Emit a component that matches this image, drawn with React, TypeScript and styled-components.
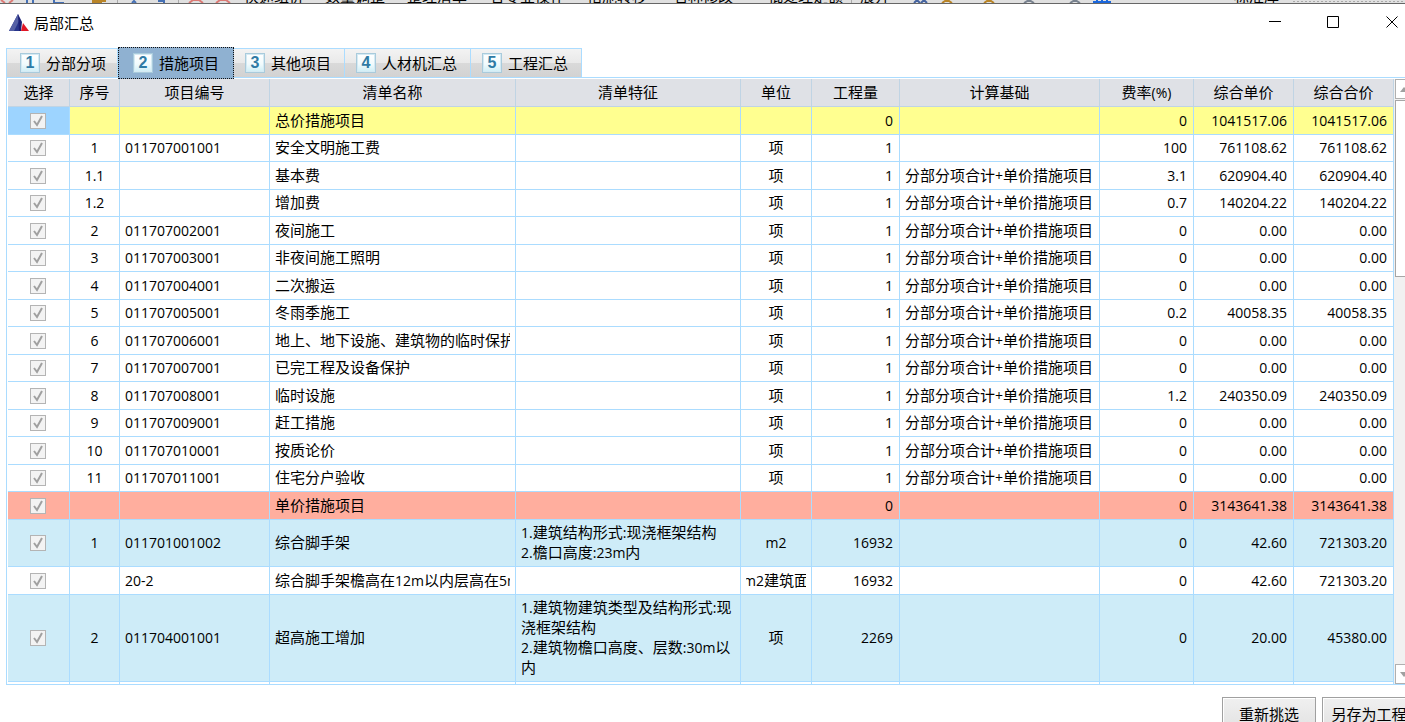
import React from 'react';
import styled, { createGlobalStyle, css } from 'styled-components';

const LINE = '#abdcff';

const Global = createGlobalStyle`
  *, *::before, *::after { box-sizing: border-box; }
  html, body, #root { height: 100%; }
  body {
    margin: 0;
    overflow: hidden;
    background: #fff;
    color: #000;
    font: 15px/20px "Noto Sans CJK SC", sans-serif;
  }
  button, input { font: inherit; color: inherit; margin: 0; }
`;

const Page = styled.div`
  display: flex;
  flex-direction: column;
  height: 100%;
  overflow: hidden;
`;

const BackStrip = styled.div`
  flex: none;
  position: relative;
  height: 4px;
  overflow: hidden;
  background: #e0e0e0;
  border-bottom: 1px solid #666;
`;

const BackLabel = styled.span<{ $x: number }>`
  position: absolute;
  left: ${p => p.$x}px;
  bottom: -3px;
  white-space: nowrap;
  line-height: 20px;
`;

const BackIcons = styled.svg`
  position: absolute;
  left: 0;
  top: 0;
`;

const TitleBar = styled.header`
  flex: none;
  display: flex;
  align-items: center;
  gap: 4px;
  height: 37px;
  padding-left: 9px;
`;

const Title = styled.h1`
  margin: 0;
  flex: 1;
  font-size: 15px;
  font-weight: 400;
  line-height: 20px;
`;

const CaptionButtons = styled.div`
  display: flex;
  margin-right: -17px;
`;

const CaptionButton = styled.button`
  display: grid;
  place-items: center;
  width: 59px;
  height: 34px;
  padding: 0;
  border: 0;
  background: transparent;
`;

const Tabs = styled.nav`
  flex: none;
  display: flex;
  align-items: flex-end;
  height: 36px;
  padding-left: 6px;
`;

const Tab = styled.button<{ $active?: boolean }>`
  display: flex;
  align-items: center;
  gap: 6px;
  height: 29px;
  padding: 0 13px 0 11px;
  border: 1px solid ${LINE};
  border-width: 1px 1px 0 0;
  background: linear-gradient(#f3f3f3, #e9e9e9 50%, #d9d9d9 51%, #d2d2d2);
  white-space: nowrap;
  &:first-child {
    padding: 0 11px 0 13px;
    border-left-width: 1px;
  }
  ${p => p.$active && css`
    position: relative;
    height: 32px;
    margin-bottom: -2px;
    padding: 0 14px;
    border: 1px dotted #111;
    background: #8fb1d1;
  `}
`;

const Badge = styled.span`
  display: grid;
  place-items: center;
  width: 20px;
  height: 20px;
  border: 1px solid #a9cbdc;
  box-shadow: inset 0 0 0 1px #d5eaf3;
  background: linear-gradient(#fff, #f2fbfd 55%, #cdeef6);
  color: #2f7ba5;
  font: 700 16px/18px "Liberation Sans", sans-serif;
`;

const Panel = styled.main`
  flex: 1;
  min-height: 0;
  display: flex;
  margin-left: 6px;
  padding: 1px 0 0 1px;
  border: 1px solid ${LINE};
  border-right: 0;
  overflow: hidden;
`;

const Grid = styled.table`
  flex: 1;
  min-width: 0;
  width: 100%;
  height: max-content;
  table-layout: fixed;
  border-collapse: separate;
  border-spacing: 0;
`;

const HeadCell = styled.th`
  height: 28px;
  padding: 0 0 2px;
  border: 1px solid #c0d4e4;
  border-width: 0 1px 1px 0;
  background: #dfe1e6;
  font-weight: 400;
  white-space: nowrap;
`;

type Tone = 'total' | 'unit' | 'item' | 'plain';

const tones: Record<Tone, string> = {
  total: '#ffff90',
  unit: '#ffae9e',
  item: '#ceecf8',
  plain: '#fff',
};

const Row = styled.tr<{ $tone: Tone; $height: number }>`
  height: ${p => p.$height}px;
  background: ${p => tones[p.$tone]};
`;

const Cell = styled.td<{ $align?: 'left' | 'center' | 'right'; $current?: boolean }>`
  padding: 0 ${p => (p.$align === 'right' ? 6 : 5)}px 2px 5px;
  border: 1px solid ${LINE};
  border-width: 0 1px 1px 0;
  text-align: ${p => p.$align ?? 'left'};
  vertical-align: middle;
  ${p => p.$current && css`background: #9dd4ff;`}
`;

const CheckCell = styled(Cell)`
  padding: 0 6px 0 5px;
`;

const Clip = styled.div<{ $center?: boolean; $wrap?: boolean }>`
  display: flex;
  flex-direction: column;
  align-items: ${p => (p.$center ? 'center' : 'stretch')};
  overflow: hidden;
  white-space: ${p => (p.$wrap ? 'normal' : 'nowrap')};
  word-break: break-all;
`;

const Latin = styled.span`
  font-family: "Open Sans", sans-serif;
  font-size: 14px;
  line-height: 14px;
`;

const Check = styled.input`
  appearance: none;
  display: block;
  width: 16px;
  height: 16px;
  margin: 0 auto;
  border: 1px solid #b4b4b4;
  background: #f3f3f3;
`;

const CheckBox = styled.div`
  display: grid;
  justify-content: center;
  & > * { grid-area: 1 / 1; }
`;

const Tick = styled.svg`
  pointer-events: none;
`;

const ScrollBar = styled.div`
  flex: none;
  display: flex;
  flex-direction: column;
  width: 19px;
  margin-right: -8px;
  padding-left: 1px;
  background: #f1f1f1;
`;

const ScrollButton = styled.button`
  flex: none;
  display: grid;
  place-items: center;
  height: 20px;
  padding: 0;
  border: 1px solid #b0b0b0;
  background: #fff;
`;

const ScrollTrack = styled.div`
  flex: 1;
  padding-top: 1px;
`;

const ScrollThumb = styled.div`
  height: 177px;
  border: 1px solid #a6a6a6;
  background: #fff;
`;

const Footer = styled.footer`
  flex: none;
  display: flex;
  justify-content: flex-end;
  gap: 6px;
  height: 37px;
  padding-top: 12px;
  margin-right: -11px;
`;

const ActionButton = styled.button`
  width: 94px;
  height: 34px;
  padding: 0;
  border: 1px solid #a0a0a0;
  background: linear-gradient(#f0f0f0, #e2e2e2);
  box-shadow: inset 1px 1px 0 #fff;
  white-space: nowrap;
`;

function Mixed({ text }: { text: string }) {
  return (
    <span>
      {text.split(/([\x20-\x7e]+)/).filter(Boolean).map((run, i) =>
        /^[\x20-\x7e]/.test(run) ? <Latin key={i}>{run}</Latin> : run,
      )}
    </span>
  );
}

const columns: { title: string; width?: number }[] = [
  { title: '选择', width: 62 },
  { title: '序号', width: 50 },
  { title: '项目编号', width: 150 },
  { title: '清单名称' },
  { title: '清单特征', width: 225 },
  { title: '单位', width: 71 },
  { title: '工程量', width: 88 },
  { title: '计算基础', width: 200 },
  { title: '费率(%)', width: 94 },
  { title: '综合单价', width: 100 },
  { title: '综合合价', width: 100 },
];

interface Item {
  tone?: Tone;
  height?: number;
  no?: string;
  code?: string;
  name: string;
  feature?: string[];
  unit?: string;
  qty: string;
  base?: string;
  rate: string;
  price: string;
  total: string;
}

const BASE = '分部分项合计+单价措施项目';

const measure = (no: string, code: string, name: string, rate: string, price: string, base = BASE): Item => ({
  no, code, name, unit: '项', qty: '1', base, rate, price, total: price,
});

const items: Item[] = [
  { tone: 'total', name: '总价措施项目', qty: '0', rate: '0', price: '1041517.06', total: '1041517.06' },
  measure('1', '011707001001', '安全文明施工费', '100', '761108.62', ''),
  measure('1.1', '', '基本费', '3.1', '620904.40'),
  measure('1.2', '', '增加费', '0.7', '140204.22'),
  measure('2', '011707002001', '夜间施工', '0', '0.00'),
  measure('3', '011707003001', '非夜间施工照明', '0', '0.00'),
  measure('4', '011707004001', '二次搬运', '0', '0.00'),
  measure('5', '011707005001', '冬雨季施工', '0.2', '40058.35'),
  measure('6', '011707006001', '地上、地下设施、建筑物的临时保护设施', '0', '0.00'),
  measure('7', '011707007001', '已完工程及设备保护', '0', '0.00'),
  measure('8', '011707008001', '临时设施', '1.2', '240350.09'),
  measure('9', '011707009001', '赶工措施', '0', '0.00'),
  measure('10', '011707010001', '按质论价', '0', '0.00'),
  measure('11', '011707011001', '住宅分户验收', '0', '0.00'),
  { tone: 'unit', name: '单价措施项目', qty: '0', rate: '0', price: '3143641.38', total: '3143641.38' },
  { tone: 'item', height: 47, no: '1', code: '011701001002', name: '综合脚手架', feature: ['1.建筑结构形式:现浇框架结构', '2.檐口高度:23m内'], unit: 'm2', qty: '16932', rate: '0', price: '42.60', total: '721303.20' },
  { height: 28, code: '20-2', name: '综合脚手架檐高在12m以内层高在5m内', unit: 'm2建筑面', qty: '16932', rate: '0', price: '42.60', total: '721303.20' },
  { tone: 'item', height: 87, no: '2', code: '011704001001', name: '超高施工增加', feature: ['1.建筑物建筑类型及结构形式:现浇框架结构', '2.建筑物檐口高度、层数:30m以内'], unit: '项', qty: '2269', rate: '0', price: '20.00', total: '45380.00' },
];

const tabs = ['分部分项', '措施项目', '其他项目', '人材机汇总', '工程汇总'];

const backLabels: [number, string][] = [
  [244, '快速组价'], [325, '数量调整'], [407, '整理清单'], [490, '各专业操作'],
  [587, '措施转移'], [673, '名称修改'], [768, '批处理定额'], [860, '展开'], [1234, '标准库'],
];

export default function App() {
  return (
    <Page>
      <Global />
      <BackStrip aria-hidden="true">
        <BackIcons width="1405" height="3">
          <g fill="none" strokeWidth="2">
            <path d="M1 0l4 3M13 0l-4 3M189 3l4-3h6l4 3M216 3l4-3h6l4 3" stroke="#dc7a75" />
            <path d="M27 0v3M33 0v3M54 0v3h10M132 3l2-2 2 2M158 1h6v2" stroke="#4570b5" />
            <path d="M92 1h14M92 3h10M942 3l3-2h4l3 2M984 3l3-2h4l3 2" stroke="#b98528" />
            <path d="M914 3l3-3 3 3M921 3l3-3 3 3" stroke="#4564a0" />
            <path d="M1024 3l5-3 5 3M1070 3l5-3 5 3" stroke="#78828f" />
            <path d="M1093 2h18M1097 0v3M1102 0v3M1107 0v3" stroke="#1b67dc" />
            <path d="M117.500 0v3M178.500 0v3M851.500 0v3" stroke="#aaa" strokeWidth="1" />
            <path d="M1293 1.500h112" stroke="#aaa" strokeWidth="1" strokeDasharray="2 2" />
          </g>
        </BackIcons>
        {backLabels.map(([x, label]) => <BackLabel key={x} $x={x}>{label}</BackLabel>)}
      </BackStrip>
      <TitleBar>
        <svg width="21" height="18" viewBox="0 0 21 18" aria-hidden="true">
          <path d="M9 0L0 17h11l1-6z" fill="#27348b" />
          <path d="M9 0L0 17h5L10 7z" fill="#5560a5" />
          <path d="M9 0l4 8-1 9h-2z" fill="#1b1f73" />
          <path d="M14 9l6 8h-8z" fill="#e01525" />
        </svg>
        <Title>局部汇总</Title>
        <CaptionButtons>
          <CaptionButton aria-label="最小化">
            <svg width="13" height="13"><path d="M1 5.500h12" stroke="#000" /></svg>
          </CaptionButton>
          <CaptionButton aria-label="最大化">
            <svg width="13" height="13"><path d="M.5 .5h11v11H.5z" fill="none" stroke="#000" /></svg>
          </CaptionButton>
          <CaptionButton aria-label="关闭">
            <svg width="13" height="13"><path d="M.5 .5l11 11M11.500 .5l-11 11" stroke="#000" /></svg>
          </CaptionButton>
        </CaptionButtons>
      </TitleBar>
      <Tabs>
        {tabs.map((label, i) => (
          <Tab key={label} $active={i === 1} aria-current={i === 1 ? 'page' : undefined}>
            <Badge>{i + 1}</Badge>
            {label}
          </Tab>
        ))}
      </Tabs>
      <Panel>
        <Grid>
          <colgroup>
            {columns.map(c => <col key={c.title} width={c.width} />)}
          </colgroup>
          <thead>
            <tr>
              {columns.map(c => <HeadCell key={c.title} scope="col"><Mixed text={c.title} /></HeadCell>)}
            </tr>
          </thead>
          <tbody>
            {items.map((item, i) => (
              <Row key={i} $tone={item.tone ?? 'plain'} $height={item.height ?? (i % 2 ? 27 : 28)}>
                <CheckCell $current={i === 0}>
                  <CheckBox>
                    <Check type="checkbox" defaultChecked disabled aria-label={item.name} />
                    <Tick width="16" height="16" aria-hidden="true">
                      <path d="M4 8l3 4 5-9" fill="none" stroke="#a0a0a0" strokeWidth="2" />
                    </Tick>
                  </CheckBox>
                </CheckCell>
                <Cell $align="center"><Mixed text={item.no ?? ''} /></Cell>
                <Cell><Mixed text={item.code ?? ''} /></Cell>
                <Cell><Clip><Mixed text={item.name} /></Clip></Cell>
                <Cell>
                  <Clip $wrap>{item.feature?.map(line => <Mixed key={line} text={line} />)}</Clip>
                </Cell>
                <Cell><Clip $center><Mixed text={item.unit ?? ''} /></Clip></Cell>
                <Cell $align="right"><Mixed text={item.qty} /></Cell>
                <Cell><Clip><Mixed text={item.base ?? ''} /></Clip></Cell>
                <Cell $align="right"><Mixed text={item.rate} /></Cell>
                <Cell $align="right"><Mixed text={item.price} /></Cell>
                <Cell $align="right"><Mixed text={item.total} /></Cell>
              </Row>
            ))}
            <Row $tone="plain" $height={28}>
              {columns.map(c => <Cell key={c.title} />)}
            </Row>
          </tbody>
        </Grid>
        <ScrollBar>
          <ScrollButton aria-label="向上滚动">
            <svg width="9" height="5"><path d="M0 5l4-5 5 5z" fill="#a0a0a0" /></svg>
          </ScrollButton>
          <ScrollTrack><ScrollThumb /></ScrollTrack>
          <ScrollButton aria-label="向下滚动">
            <svg width="9" height="5"><path d="M0 0l4 5 5-5z" fill="#a0a0a0" /></svg>
          </ScrollButton>
        </ScrollBar>
      </Panel>
      <Footer>
        <ActionButton>重新挑选</ActionButton>
        <ActionButton>另存为工程</ActionButton>
      </Footer>
    </Page>
  );
}
